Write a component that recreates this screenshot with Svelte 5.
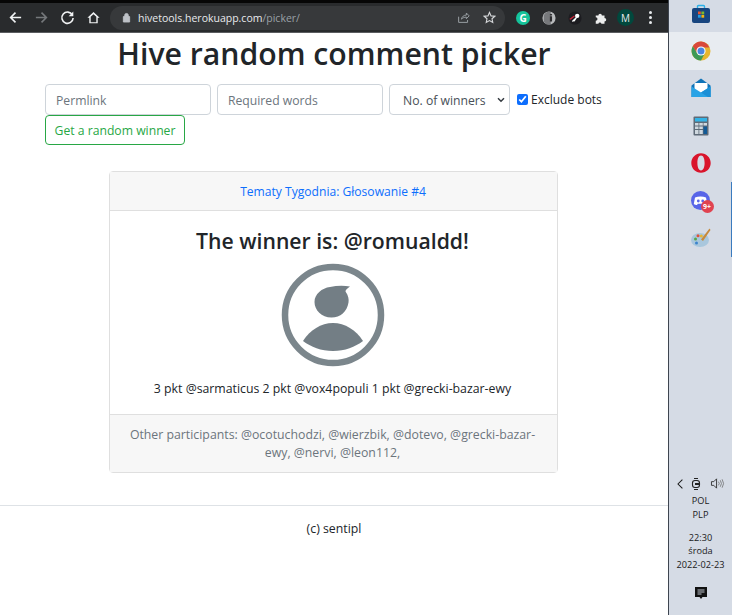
<script>
  const taskIcons = ['store', 'chrome', 'mail', 'calc', 'opera', 'discord', 'paint'];
</script>

<div class="screen">
  <div class="browser">
    <header class="chrome">
      <div class="tabstrip"></div>
      <div class="toolbar">
        <svg class="nav" viewBox="0 0 16 16"><path d="M14 8H3M8 2.800 2.800 8 8 13.200" fill="none" stroke="#f1f3f4" stroke-width="1.700"/></svg>
        <svg class="nav" viewBox="0 0 16 16"><path d="M2 8h11M8 2.800 13.200 8 8 13.200" fill="none" stroke="#75787b" stroke-width="1.700"/></svg>
        <svg class="nav" viewBox="0 0 16 16"><path d="M13.200 5.200A6 6 0 1 0 14 8.500" fill="none" stroke="#f1f3f4" stroke-width="1.700"/><path d="M14.200 1.600v5h-5z" fill="#f1f3f4"/></svg>
        <svg class="nav" viewBox="0 0 16 16"><path d="M8 2 1.500 8.200h2v6h9v-6h2zM5 13V7.200l3-2.800 3 2.800V13z" fill="#f1f3f4"/></svg>
        <div class="omnibox">
          <svg class="lock" viewBox="0 0 10 12"><path d="M1.500 5h7v6h-7zM3 5V3.500a2 2 0 0 1 4 0V5" fill="#bdc1c6" stroke="#bdc1c6"/></svg>
          <span class="url"><span class="host">hivetools.herokuapp.com</span><span class="path">/picker/</span></span>
          <svg class="omni-icon share" viewBox="0 0 16 16"><path d="M2 7v7h11v-3M5.500 10c.5-3 3-5 6-5V2.500L15 6l-3.500 3.500V7.500c-2.500 0-4.500 1-6 2.500z" fill="none" stroke="#9aa0a6" stroke-width="1.200"/></svg>
          <svg class="omni-icon star" viewBox="0 0 16 16"><path d="m8 1.800 1.900 4.200 4.600.5-3.400 3.100.9 4.500L8 11.800l-4 2.300.9-4.500L1.500 6.500 6.100 6z" fill="none" stroke="#d6d8da" stroke-width="1.400"/></svg>
        </div>
        <div class="ext grammarly"><span>G</span></div>
        <div class="ext reader">
          <svg viewBox="0 0 16 16"><circle cx="8" cy="8" r="7.500" fill="#b9bbbd"/><path d="M2 5a7 7 0 0 1 8-4v14a7 7 0 0 1-8-3z" fill="#77797c"/><rect x="9" y="6" width="2.500" height="6" fill="#2c2c2e"/><rect x="9" y="3.500" width="2.500" height="1.600" fill="#2c2c2e"/></svg>
        </div>
        <div class="ext key">
          <svg viewBox="0 0 16 16"><circle cx="8" cy="8" r="7.500" fill="#1c1c20"/><path d="M1.500 9 7 5l1 1-5 4z" fill="#d0243a"/><circle cx="10.500" cy="5.500" r="2.500" fill="#fff"/><path d="m9.500 6.500-5 5 1 1 1-.8 1 .3 3-4.500z" fill="#fff"/></svg>
        </div>
        <svg class="puzzle" viewBox="0 0 16 16"><path d="M2 5h3a2 2 0 0 1 4 0h3v3a2 2 0 0 1 0 4v2.500H8.500a1.800 1.800 0 0 0-3.500 0H2V11a2 2 0 0 0 0-4z" fill="#eceded"/></svg>
        <div class="avatar">M</div>
        <div class="menu"><i></i><i></i><i></i></div>
      </div>
    </header>

    <main>
      <h1>Hive random comment picker</h1>
      <form class="picker" onsubmit={(e) => e.preventDefault()}>
        <input class="field" placeholder="Permlink" />
        <input class="field" placeholder="Required words" />
        <div class="select-wrap">
          <select class="field select">
            <option>No. of winners</option>
          </select>
          <svg class="caret" viewBox="0 0 8 6"><path d="M1 1.200 4 4.200 7 1.200" fill="none" stroke="#343a40" stroke-width="1.500"/></svg>
        </div>
        <label class="bots"><input type="checkbox" checked /> Exclude bots</label>
        <button>Get a random winner</button>
      </form>

      <section class="card">
        <div class="card-head"><a href="#top">Tematy Tygodnia: Głosowanie #4</a></div>
        <div class="card-body">
          <h2>The winner is: @romualdd!</h2>
          <svg class="person" viewBox="0 0 104 104">
            <circle cx="52" cy="52" r="48" fill="none" stroke="#7b868c" stroke-width="6.500"/>
            <path d="M49 24c7-1.500 14-1.500 20-.5-3 2-4.500 3.500-4.500 5 3 4 3.500 8 3 11-1.500 9-8 15-17 15-10 0-17-7.500-17-15.500C33.500 31 41 25 49 24z" fill="#737e85"/>
            <path d="M22 78c7-11 18-18 30-18s23 7 30 18c-8 6-18 10-30 10s-22-4-30-10z" fill="#737e85"/>
          </svg>
          <p>3 pkt @sarmaticus 2 pkt @vox4populi 1 pkt @grecki-bazar-ewy</p>
        </div>
        <div class="card-foot">Other participants: @ocotuchodzi, @wierzbik, @dotevo, @grecki-bazar-ewy, @nervi, @leon112,</div>
      </section>
    </main>

    <footer>(c) sentipl</footer>
  </div>

  <aside class="taskbar">
    <div class="apps">
      {#each taskIcons as icon}
        <div class="app" class:active={icon === 'chrome'} class:running={icon === 'discord' || icon === 'paint'}>
          {#if icon === 'store'}
            <svg viewBox="0 0 20 20"><path d="M6.500 4V2.500a1 1 0 0 1 1-1h5a1 1 0 0 1 1 1V4" fill="none" stroke="#2ab0e8" stroke-width="1.400"/><rect x="1" y="4" width="18" height="15" rx="2" fill="#17457f"/><rect x="7" y="7.500" width="2.800" height="2.800" fill="#e8552d"/><rect x="10.400" y="7.500" width="2.800" height="2.800" fill="#7cb82c"/><rect x="7" y="10.900" width="2.800" height="2.800" fill="#1f9fe8"/><rect x="10.400" y="10.900" width="2.800" height="2.800" fill="#f7b50c"/></svg>
          {:else if icon === 'chrome'}
            <svg viewBox="0 0 20 20"><circle cx="10" cy="10" r="9.500" fill="#e6b62f"/><path d="M10 .5a9.500 9.500 0 0 0-8.200 4.800L6 12l4-5.500h8.300A9.500 9.500 0 0 0 10 .5z" fill="#d9483b"/><path d="M1.800 5.300A9.500 9.500 0 0 0 10 19.500l4-7.500H6z" fill="#3d9a56"/><circle cx="10" cy="10" r="4.600" fill="#fff"/><circle cx="10" cy="10" r="3.500" fill="#4a86e0"/></svg>
          {:else if icon === 'mail'}
            <svg viewBox="0 0 20 20"><path d="M.5 7.500 10 .5l9.500 7V19H.5z" fill="#0f73b8"/><path d="M3.500 5h13v7l-6.500 3-6.500-3z" fill="#fff"/><path d="M.5 8.500 10 14.500l9.500-6V19H.5z" fill="#29a3e6"/><path d="M10 14.500 19.500 8.500V19H17z" fill="#1b8fd6"/></svg>
          {:else if icon === 'calc'}
            <svg viewBox="0 0 20 20"><rect x="2.500" y="0.500" width="15" height="19" rx="1" fill="#5e6b78"/><rect x="4" y="2" width="12" height="3.500" fill="#34b3e6"/><path d="M4 7h3.500v2.500H4zM8.300 7h3.500v2.500H8.300zM4 10.500h3.500V13H4zM8.300 10.500h3.500V13H8.300zM4 14h3.500v4H4zM8.300 14h3.500v4H8.300zM12.500 7H16v2.500h-3.500z" fill="#cfd8df"/><rect x="12.500" y="10.500" width="3.500" height="7.500" fill="#125a96"/></svg>
          {:else if icon === 'opera'}
            <svg viewBox="0 0 20 20"><path fill-rule="evenodd" d="M10 .2C4.500.2.300 4.700.3 10s4.200 9.800 9.700 9.800 9.700-4.500 9.700-9.800S15.500.2 10 .2zm0 2.400c2.500 0 3.600 3.400 3.600 7.400s-1.100 7.400-3.600 7.400S6.400 14 6.400 10 7.500 2.600 10 2.600z" fill="#d9142b"/></svg>
          {:else if icon === 'discord'}
            <div class="discord">
              <svg viewBox="0 0 20 20"><circle cx="9.500" cy="9.500" r="9.500" fill="#5865e8"/><path d="M4 6.500c3.500-1.500 7.500-1.500 11 0l1.200 6.500c-1 .8-2.200 1-3.200 1l-.8-1.300H6.800L6 14c-1 0-2.200-.2-3.200-1z" fill="#fff"/><circle cx="7.300" cy="10" r="1.400" fill="#5865e8"/><circle cx="11.700" cy="10" r="1.400" fill="#5865e8"/></svg>
              <span>9+</span>
            </div>
          {:else}
            <svg viewBox="0 0 20 20"><ellipse cx="9" cy="12" rx="9" ry="7" fill="#a9c7dd"/><circle cx="4.500" cy="11" r="1.500" fill="#57a64a"/><circle cx="7" cy="7.800" r="1.500" fill="#e0503a"/><circle cx="10.300" cy="8" r="1.500" fill="#e9b52f"/><circle cx="5.500" cy="15" r="1.500" fill="#3d84cc"/><path d="m18.500.5-8.500 11 2 1.500 7.500-11z" fill="#c68a3c"/></svg>
          {/if}
        </div>
      {/each}
    </div>

    <div class="tray">
      <div class="tray-icons">
        <svg viewBox="0 0 10 14" class="chev"><path d="M8 1.500 2.500 7 8 12.500" fill="none" stroke="#1b1b1b" stroke-width="1.300"/></svg>
        <svg viewBox="0 0 12 14" class="meet"><rect x="1.500" y="3.500" width="7" height="7" rx="2.500" fill="none" stroke="#222" stroke-width="1.100"/><path d="M3 1.500h4M3 12.500h4" stroke="#222"/><rect x="4" y="6" width="5" height="2" fill="#222"/></svg>
        <svg viewBox="0 0 16 14" class="vol"><path d="M1.500 5h2.500l3-3v10l-3-3H1.500z" fill="none" stroke="#333"/><path d="M9 5a3 3 0 0 1 0 4M11 3.500a6 6 0 0 1 0 7M13 2.500a8 8 0 0 1 0 9" fill="none" stroke="#666" stroke-width=".8"/></svg>
      </div>
      <div class="lang">POL<br />PLP</div>
      <div class="clock">
        <div>22:30</div>
        <div>środa</div>
        <div>2022-02-23</div>
      </div>
      <svg class="notif" viewBox="0 0 14 14"><path d="M1 1h12v10H8.500L7 13l-1.500-2H1z" fill="#111"/><path d="M3.500 4h7M3.500 6h7M3.500 8h4" stroke="#d5dbe5" stroke-width=".9"/></svg>
    </div>
  </aside>
</div>

<style>
  :global(body) {
    margin: 0;
    background: #fff;
  }
  .screen {
    display: flex;
    width: 732px;
    height: 615px;
    overflow: hidden;
    font-family: "Open Sans", "Noto Sans", sans-serif;
    color: #212529;
  }
  .browser {
    width: 668px;
    flex: none;
    display: flex;
    flex-direction: column;
  }
  .chrome {
    height: 33px;
    flex: none;
    background: #292b2d;
    border-bottom: 1px solid #5b5d60;
    box-sizing: border-box;
  }
  .tabstrip {
    height: 3px;
    background: #060606;
  }
  .toolbar {
    height: 29px;
    display: flex;
    align-items: center;
    padding-left: 8px;
  }
  .nav {
    width: 15px;
    height: 15px;
    flex: none;
    margin-right: 11px;
  }
  .omnibox {
    width: 395px;
    height: 24px;
    border-radius: 12px;
    background: #37393b;
    display: flex;
    align-items: center;
    flex: none;
    margin-left: -2px;
    padding-left: 12px;
    box-sizing: border-box;
  }
  .lock {
    width: 9px;
    height: 11px;
    margin-right: 7px;
  }
  .url {
    font-size: 10.500px;
    flex: 1;
  }
  .host {
    color: #e8eaed;
  }
  .path {
    color: #9aa0a6;
  }
  .omni-icon {
    width: 13px;
    height: 13px;
    flex: none;
  }
  .share {
    margin-right: 13px;
  }
  .star {
    margin-right: 9px;
  }
  .ext {
    width: 14px;
    height: 14px;
    border-radius: 50%;
    flex: none;
    display: grid;
    place-items: center;
    font-size: 10px;
    font-weight: 700;
    color: #fff;
    margin-left: 12px;
  }
  .grammarly {
    background: #15c39a;
    margin-left: 11px;
  }
  .ext svg {
    width: 14px;
    height: 14px;
    display: block;
  }
  .puzzle {
    width: 14px;
    height: 14px;
    margin-left: 12px;
    flex: none;
  }
  .avatar {
    width: 17px;
    height: 17px;
    border-radius: 50%;
    background: #01483d;
    color: #e8eaed;
    font-size: 10px;
    display: grid;
    place-items: center;
    margin-left: 9px;
    flex: none;
  }
  .menu {
    display: flex;
    flex-direction: column;
    gap: 2px;
    margin-left: 15px;
  }
  .menu i {
    width: 3px;
    height: 3px;
    border-radius: 50%;
    background: #e8eaed;
  }
  main {
    padding: 0 45px;
    height: 473px;
    flex: none;
    border-bottom: 1px solid #dee2e6;
    box-sizing: border-box;
  }
  h1 {
    margin: 0;
    font-size: 30.200px;
    font-weight: 600;
    line-height: 42px;
    text-align: center;
  }
  .picker {
    margin-top: 9px;
    display: flex;
    flex-wrap: wrap;
    align-items: center;
    gap: 0 6px;
    width: 580px;
  }
  .field {
    width: 166px;
    height: 31px;
    padding: 1px 10px 0;
    box-sizing: border-box;
    border: 1px solid #ced4da;
    border-radius: 4px;
    font: inherit;
    font-size: 12.200px;
    color: #495057;
    background: #fff;
  }
  .field::placeholder {
    color: #6c757d;
  }
  .select-wrap {
    position: relative;
    width: 121px;
    height: 31px;
  }
  .select {
    appearance: none;
    width: 121px;
    padding: 1px 20px 0 13px;
  }
  .caret {
    position: absolute;
    right: 5px;
    top: 13px;
    width: 8px;
    height: 6px;
    pointer-events: none;
  }
  .bots {
    display: flex;
    align-items: center;
    gap: 3px;
    font-size: 12px;
    margin-left: 1px;
  }
  .bots input {
    margin: 0;
    width: 11px;
    height: 11px;
    accent-color: #0d6efd;
  }
  button {
    width: 140px;
    height: 30px;
    padding: 0;
    border: 1px solid #28a745;
    border-radius: 4px;
    background: #fff;
    color: #28a745;
    font: inherit;
    font-size: 12.200px;
  }
  .card {
    margin: 26px 0 0 64px;
    width: 449px;
    border: 1px solid #dfdfdf;
    border-radius: 4px;
    box-sizing: border-box;
    text-align: center;
    font-size: 12.300px;
  }
  .card-head {
    height: 39px;
    box-sizing: border-box;
    padding-right: 1px;
    background: #f7f7f7;
    border-bottom: 1px solid #dfdfdf;
    display: grid;
    place-items: center;
  }
  a {
    color: #0d6efd;
    font-size: 12.100px;
    text-decoration: none;
  }
  .card-body {
    height: 203px;
    padding: 15px 2px 0 0;
    box-sizing: border-box;
  }
  h2 {
    margin: 0;
    font-size: 21.200px;
    font-weight: 600;
    line-height: 29px;
  }
  .person {
    display: block;
    width: 104px;
    height: 104px;
    margin: 8px auto 0;
  }
  p {
    margin: 12px 0 0;
    line-height: 20px;
  }
  .card-foot {
    background: #f7f7f7;
    border-top: 1px solid #dfdfdf;
    padding: 11px 18px 0 16px;
    color: #6c757d;
    line-height: 18px;
    height: 58px;
    box-sizing: border-box;
  }
  footer {
    text-align: center;
    font-size: 12.300px;
    line-height: 20px;
    padding-top: 13px;
  }
  .taskbar {
    width: 64px;
    flex: none;
    background: #d5dbe5;
    display: flex;
    flex-direction: column;
    justify-content: space-between;
    color: #1a1a1a;
    border-left: 1px solid #3e4550;
    box-sizing: border-box;
  }
  .app {
    height: 37.500px;
    display: grid;
    place-items: center;
  }
  .app:first-child {
    height: 32px;
    padding-bottom: 4px;
    box-sizing: border-box;
  }
  .app svg {
    width: 20px;
    height: 20px;
    display: block;
  }
  .active {
    background: #e8ecf1;
  }
  .running {
    box-shadow: inset -1px 0 0 #3a7bbf;
  }
  .discord {
    position: relative;
    width: 20px;
    height: 20px;
  }
  .discord span {
    position: absolute;
    right: -3px;
    bottom: -2px;
    width: 13px;
    height: 13px;
    border-radius: 50%;
    background: #e04350;
    color: #fff;
    font-size: 7px;
    font-weight: 700;
    line-height: 13px;
    text-align: center;
  }
  .tray {
    text-align: center;
    font-size: 9.200px;
    padding-bottom: 15px;
    line-height: 14px;
  }
  .tray-icons {
    display: flex;
    align-items: center;
    justify-content: center;
    gap: 7px;
  }
  .chev {
    width: 8px;
    height: 12px;
  }
  .meet {
    width: 12px;
    height: 14px;
  }
  .vol {
    width: 15px;
    height: 13px;
  }
  .lang {
    margin-top: 3px;
  }
  .clock {
    margin-top: 9px;
    line-height: 13.500px;
  }
  .notif {
    width: 14px;
    height: 14px;
    display: block;
    margin: 15px auto 0;
  }
</style>
